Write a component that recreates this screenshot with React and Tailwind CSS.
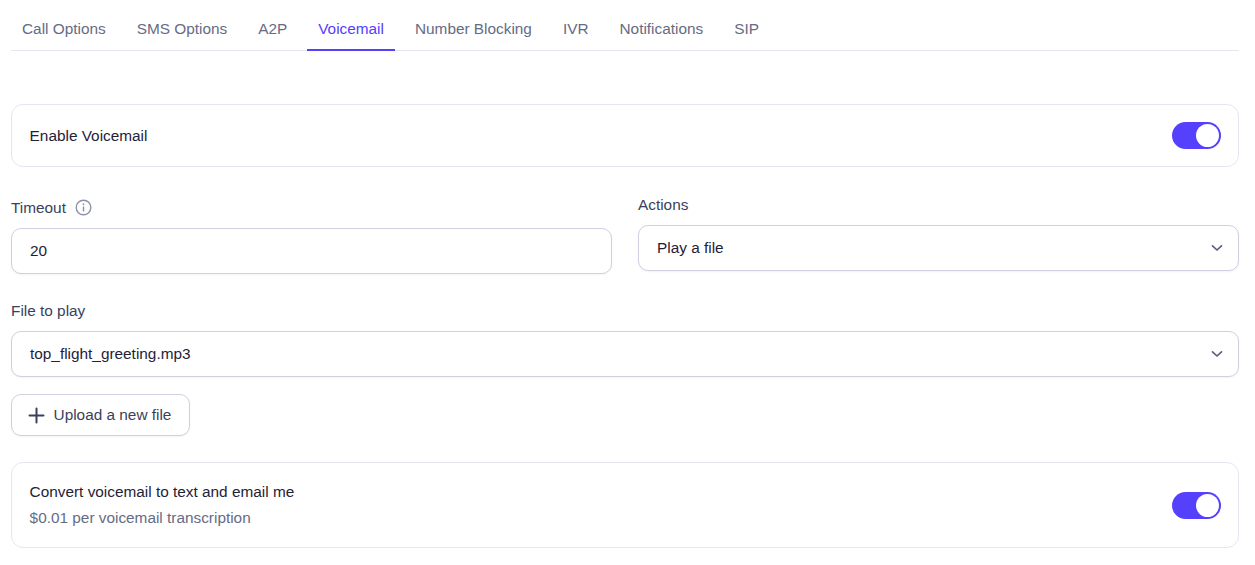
import React from "react";

const tabs = ["Call Options", "SMS Options", "A2P", "Voicemail", "Number Blocking", "IVR", "Notifications", "SIP"];

function Toggle() {
  return (
    <div className="flex h-[27px] w-[49px] shrink-0 items-center justify-end rounded-full bg-[#5540fb] pr-[2px]">
      <div className="h-[23px] w-[23px] rounded-full bg-white" />
    </div>
  );
}

function Chevron() {
  return (
    <svg width="14" height="14" viewBox="0 0 14 14" fill="none" stroke="#5c5f7a" strokeWidth="1.7" strokeLinecap="round" strokeLinejoin="round">
      <path d="M2.5 4.8 L7 9 L11.5 4.8" />
    </svg>
  );
}

function Select({ value }) {
  return (
    <div className="flex h-[46px] items-center justify-between rounded-[10px] border border-[#d0d0e0] bg-white pl-[18px] pr-[14px] text-[15.36px] text-[#1f2237] shadow-[0_1px_2px_rgba(16,24,40,0.05)]">
      <span>{value}</span>
      <Chevron />
    </div>
  );
}

export default function App() {
  return (
    <div className="h-[565px] w-[1255px] overflow-hidden bg-white px-[11px] font-['Liberation_Sans',sans-serif]">
      <div className="w-[1228px]">
        <nav className="flex h-[51px] gap-[9px] border-b border-[#e6e6f0]">
          {tabs.map((t) => (
            <div
              key={t}
              className={
                "flex h-[51px] items-center border-b-2 px-[11px] pt-[9px] text-[15.36px] " +
                (t === "Voicemail" ? "border-[#5540fb] text-[#5540fb]" : "border-transparent text-[#666b85]")
              }
            >
              {t}
            </div>
          ))}
        </nav>

        <div className="mt-[53px] flex h-[63px] items-center justify-between rounded-xl border border-[#e6e6f0] pl-[17.6px] pr-[17px]">
          <span className="text-[15.36px] text-[#1f2237]">Enable Voicemail</span>
          <Toggle />
        </div>

        <div className="mt-[27px] grid grid-cols-2 items-start gap-x-[26px]">
          <div>
            <div className="flex h-[24px] items-center gap-[9px] pt-[3px] text-[15.36px] text-[#3a3f5c]">
              <span>Timeout</span>
              <svg width="17" height="17" viewBox="0 0 17 17" fill="none" stroke="#8d91a8" strokeWidth="1.4" strokeLinecap="round">
                <circle cx="8.5" cy="8.5" r="7.3" />
                <path d="M8.5 8 V12" />
                <path d="M8.5 5.2 V5.3" strokeWidth="1.7" />
              </svg>
            </div>
            <div className="mt-[10px] flex h-[46px] items-center rounded-[10px] border border-[#d0d0e0] bg-white pl-[18px] text-[15.36px] text-[#1f2237] shadow-[0_1px_2px_rgba(16,24,40,0.05)]">
              20
            </div>
          </div>
          <div>
            <div className="flex h-[21px] items-center text-[15.36px] text-[#3a3f5c]">Actions</div>
            <div className="mt-[10px]">
              <Select value="Play a file" />
            </div>
          </div>
        </div>

        <div className="mt-[26px] flex h-[21px] items-center text-[15.36px] text-[#3a3f5c]">File to play</div>
        <div className="mt-[10px]">
          <Select value="top_flight_greeting.mp3" />
        </div>

        <button className="mt-[17px] flex h-[42px] w-[179px] items-center gap-[8.2px] rounded-[10px] border border-[#d0d0e0] bg-white pl-[16.4px] text-[15.36px] text-[#3a3f5c] shadow-[0_1px_2px_rgba(16,24,40,0.05)]">
          <svg width="17" height="17" viewBox="0 0 17 17" fill="none" stroke="#3a3f5c" strokeWidth="2" strokeLinecap="round">
            <path d="M8.5 1.5 V15.5 M1.5 8.5 H15.5" />
          </svg>
          Upload a new file
        </button>

        <div className="mt-[26px] flex h-[86px] items-center justify-between rounded-xl border border-[#e6e6f0] pl-[17.6px] pr-[17px]">
          <div className="flex flex-col gap-[8px]">
            <span className="text-[15.36px] leading-[18px] text-[#1f2237]">Convert voicemail to text and email me</span>
            <span className="text-[15.36px] leading-[18px] text-[#666b85]">$0.01 per voicemail transcription</span>
          </div>
          <Toggle />
        </div>
      </div>
    </div>
  );
}
